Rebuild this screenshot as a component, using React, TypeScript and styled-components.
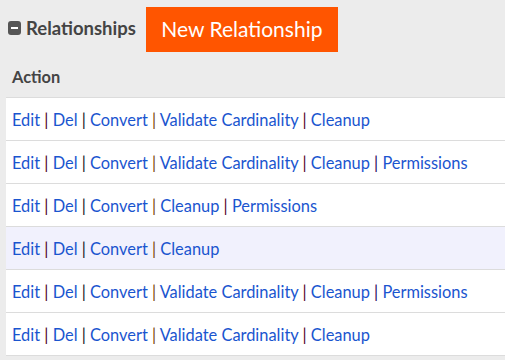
import React from "react";
import styled, { createGlobalStyle } from "styled-components";

const Global = createGlobalStyle`
  html, body { margin: 0; padding: 0; background: #ececec; }
  body { font-family: Lato, "Open Sans", sans-serif; }
`;

const Page = styled.div`
  background: #ececec;
  min-height: 360px;
`;

const Header = styled.div`
  display: flex;
  align-items: center;
  padding: 7px 0 3px 8px;
  gap: 10px;
`;

const Title = styled.h2`
  display: flex;
  align-items: center;
  gap: 5px;
  margin: 0;
  font-size: 18.5px;
  font-weight: 700;
  color: #444;
  margin-top: -4px;
`;

const Collapse = styled.span`
  display: inline-flex;
  align-items: center;
  justify-content: center;
  width: 13px;
  height: 14px;
  border-radius: 3px;
  background: #555;
  &::after {
    content: "";
    width: 7px;
    height: 2px;
    background: #fff;
  }
`;

const NewButton = styled.button`
  height: 45px;
  width: 192px;
  border: none;
  background: #ff5500;
  color: #fff;
  font-family: Lato, sans-serif;
  font-size: 21px;
  padding: 0 0 2px;
`;

const Table = styled.table`
  margin-left: 6px;
  width: calc(100% - 6px);
  border-collapse: collapse;
`;

const HeadCell = styled.th`
  height: 42px;
  padding: 0 6px;
  text-align: left;
  font-size: 16.4px;
  font-weight: 700;
  color: #444;
  border-bottom: 1px solid #dcdcdc;
`;

const Row = styled.tr<{ $hl?: boolean }>`
  background: ${(p) => (p.$hl ? "#f1f1fd" : "#fff")};
`;

const Cell = styled.td`
  height: 42px;
  padding: 0 6px;
  font-size: 16.4px;
  color: #1a55cf;
  border-bottom: 1px solid #dcdcdc;
  white-space: nowrap;
`;

const Link = styled.a`
  color: #1a55cf;
  text-decoration: none;
`;

const Sep = styled.span<{ $c: string }>`
  color: ${(p) => p.$c};
`;

const rows: string[][] = [
  ["Edit", "Del", "Convert", "Validate Cardinality", "Cleanup"],
  ["Edit", "Del", "Convert", "Validate Cardinality", "Cleanup", "Permissions"],
  ["Edit", "Del", "Convert", "Cleanup", "Permissions"],
  ["Edit", "Del", "Convert", "Cleanup"],
  ["Edit", "Del", "Convert", "Validate Cardinality", "Cleanup", "Permissions"],
  ["Edit", "Del", "Convert", "Validate Cardinality", "Cleanup"],
];

const sepColors = ["#50001c", "#141420", "#7a4408", "#50001c", "#28005e"];

export default function App() {
  return (
    <Page>
      <Global />
      <Header>
        <Title>
          <Collapse />
          Relationships
        </Title>
        <NewButton>New Relationship</NewButton>
      </Header>
      <Table>
        <thead>
          <tr>
            <HeadCell>Action</HeadCell>
          </tr>
        </thead>
        <tbody>
          {rows.map((r, i) => (
            <Row key={i} $hl={i === 3}>
              <Cell>
                {r.map((l, j) => (
                  <React.Fragment key={j}>
                    {j > 0 && <Sep $c={sepColors[(j - 1) % sepColors.length]}> | </Sep>}
                    <Link href="#">{l}</Link>
                  </React.Fragment>
                ))}
              </Cell>
            </Row>
          ))}
        </tbody>
      </Table>
    </Page>
  );
}
